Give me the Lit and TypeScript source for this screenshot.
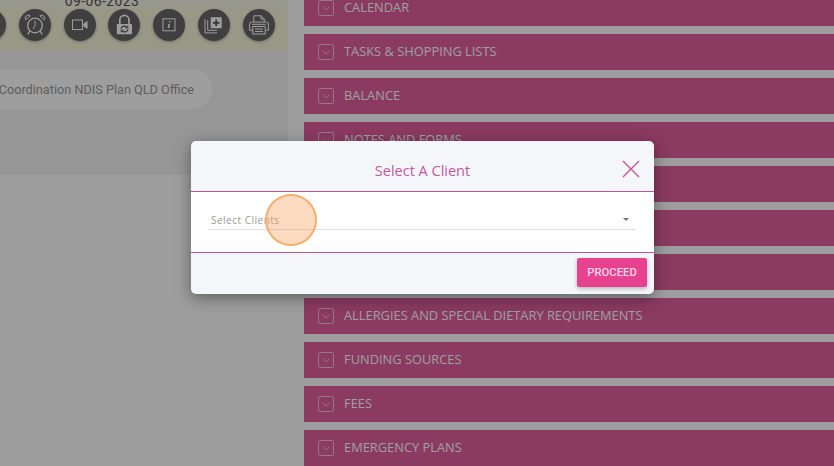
import {LitElement, html, css, svg} from 'lit';
import {customElement} from 'lit/decorators.js';

const ROWS = [
    'CALENDAR',
    'TASKS & SHOPPING LISTS',
    'BALANCE',
    'NOTES AND FORMS',
    '',
    '',
    '',
    'ALLERGIES AND SPECIAL DIETARY REQUIREMENTS',
    'FUNDING SOURCES',
    'FEES',
    'EMERGENCY PLANS',
];

const ICONS = [
    svg``,
    // alarm clock
    svg`<circle cx="12" cy="12.500" r="7.300" stroke-width="1.300" />
        <path d="M12 7.500v5.500l-2.200 3" />
        <path d="M2.800 6.800a3 3 0 0 1 4.400-4zM21.200 6.800a3 3 0 0 0-4.400-4z" />
        <path d="M6.800 18 4.800 21.500M17.200 18l2 3.500" stroke-width="1.300" />`,
    // video camera
    svg`<rect x="4.500" y="7" width="10" height="9.500" />
        <path d="M15.200 11 19.500 7.800v8.200L15.200 13z" fill="currentColor" stroke="none" />`,
    // padlock with sync arrows
    svg`<path d="M7.800 11V7a4.600 4.600 0 0 1 9.200 0v4" stroke-width="1.700" />
        <rect x="4.800" y="11" width="15.200" height="10.200" rx="1" fill="currentColor" stroke="none" />
        <path d="M9 16a3.400 3.400 0 0 1 6-1.700M16 16a3.400 3.400 0 0 1-6 1.700" stroke="#555" stroke-width="1.200" />
        <path d="M15.800 12.600v2.200h-2.200M9.200 19.400v-2.200h2.200" stroke="#555" stroke-width="1" />`,
    // info box
    svg`<rect x="6" y="5.800" width="12" height="12" />
        <path d="M12.800 8.300v1.300M12.200 11l-.8 4.200" stroke-width="1.700" />`,
    // add to collection
    svg`<rect x="8.700" y="4.300" width="11" height="11" rx="0.500" fill="currentColor" stroke="none" />
        <path d="M14.200 6.500v6.600M10.900 9.800h6.600" stroke="#555" stroke-width="1.800" />
        <path d="M5.700 7v10.300h9.300" />
        <path d="M3 6.300v13.600h12" />`,
    // printer
    svg`<path d="M6.800 9V2.800h7.400l3 3V9" />
        <path d="M14 2.800v3.200h3.200" />
        <path d="M2.600 17.200V11a2 2 0 0 1 2-2h14.800a2 2 0 0 1 2 2v6.200h-3" />
        <path d="M5.800 17.200h-3.200" />
        <rect x="5.800" y="13.500" width="12.400" height="7.500" />
        <path d="M5 11.300h14M8 16h8M8 18.500h8" />`,
];

@customElement('app-root')
export class AppRoot extends LitElement {
    static styles = css`
        :host {
            display: block;
            position: relative;
            width: 834px;
            height: 466px;
            overflow: hidden;
            background: #fff;
            font-family: "Open Sans", sans-serif;
        }
        .page {
            display: grid;
            grid-template-columns: 288px 530px;
            column-gap: 16px;
            height: 466px;
            overflow: hidden;
        }
        .left {
            height: 175px;
            background: #f3f3f3;
        }
        .date {
            height: 8px;
            overflow: hidden;
            display: flex;
            align-items: flex-end;
            justify-content: center;
            padding-right: 84px;
            background: #f6f5e6;
            font-family: Roboto, sans-serif;
            font-size: 14px;
            line-height: 14px;
            letter-spacing: 0.4px;
            color: #555;
        }
        .toolbar {
            height: 42px;
            background: #f7f5da;
            display: flex;
            gap: 12.8px;
            margin-bottom: 19px;
            padding-top: 1px;
            box-sizing: border-box;
            overflow: hidden;
        }
        .tool {
            flex: none;
            width: 32px;
            height: 32px;
            border-radius: 50%;
            background: #666;
            color: #fff;
            display: flex;
            align-items: center;
            justify-content: center;
            box-shadow: 0 1px 3px rgba(0, 0, 0, 0.3);
        }
        .tool:first-child {
            margin-left: -26px;
        }
        .tool svg {
            width: 24px;
            height: 24px;
            fill: none;
            stroke: currentColor;
            stroke-width: 1;
        }
        .pill {
            width: 212px;
            height: 40px;
            border-radius: 0 20px 20px 0;
            background: #ffffff;
            display: flex;
            align-items: center;
            justify-content: flex-end;
            padding-right: 18px;
            box-sizing: border-box;
            overflow: hidden;
            white-space: nowrap;
            font-family: Roboto, sans-serif;
            font-size: 12.700px;
            color: #999;
        }
        .rows {
            margin-top: -10px;
            display: flex;
            flex-direction: column;
            gap: 8px;
        }
        .row {
            flex: none;
            height: 36px;
            background: #e05e9f;
            display: flex;
            align-items: center;
            gap: 10px;
            padding-left: 14px;
            color: #fff;
            font-size: 12.850px;
        }
        .label {
            padding-bottom: 2px;
        }
        .check {
            width: 16px;
            height: 16px;
            box-sizing: border-box;
            border: 1px solid rgba(255, 255, 255, 0.6);
            border-radius: 2px;
            display: flex;
            align-items: center;
            justify-content: center;
        }
        .check svg {
            width: 10px;
            height: 10px;
            fill: none;
            stroke: rgba(255, 255, 255, 0.55);
            stroke-width: 1;
        }
        .scrim {
            position: absolute;
            inset: 0;
            background: rgba(0, 0, 0, 0.38);
        }
        .modal {
            position: absolute;
            left: 191px;
            top: 141px;
            width: 463px;
            height: 153px;
            background: #f5f6fa;
            border-radius: 5px;
            box-shadow: 0 4px 16px rgba(0, 0, 0, 0.4);
            display: flex;
            flex-direction: column;
            overflow: hidden;
        }
        .modal-head {
            height: 51px;
            flex: none;
            box-sizing: border-box;
            padding-top: 8px;
            border-bottom: 1px solid #b9559a;
            display: flex;
            align-items: center;
            justify-content: center;
            color: #c4589c;
            font-size: 14.500px;
            position: relative;
        }
        .close {
            position: absolute;
            right: 14px;
            top: 19px;
            width: 18px;
            height: 18px;
            fill: none;
            stroke: #c8578f;
            stroke-width: 1.400;
        }
        .modal-body {
            height: 61px;
            flex: none;
            box-sizing: border-box;
            background: #fff;
            border-bottom: 1px solid #b9559a;
            padding: 18px 18px 0;
        }
        .select {
            height: 19px;
            border-bottom: 1px solid #ddd;
            display: flex;
            align-items: center;
            justify-content: space-between;
            padding: 0 7px 0 2px;
            font-size: 10px;
            letter-spacing: 0.5px;
            color: #999;
        }
        .caret {
            width: 0;
            height: 0;
            border-left: 3.500px solid transparent;
            border-right: 3.500px solid transparent;
            border-top: 3.500px solid #777;
        }
        .modal-foot {
            flex: 1;
            display: flex;
            justify-content: flex-end;
            padding: 5px 7px 0 0;
        }
        .proceed {
            width: 70px;
            height: 29px;
            padding: 0;
            border: 0;
            border-radius: 2px;
            background: #e6428f;
            color: #fbd6e8;
            font-family: Roboto, sans-serif;
            font-size: 11.300px;
            font-weight: 500;
            box-shadow: 0 2px 4px rgba(0, 0, 0, 0.25);
        }
        .cursor {
            position: absolute;
            left: 265px;
            top: 194px;
            width: 52px;
            height: 52px;
            box-sizing: border-box;
            border: 2px solid rgba(243, 167, 100, 0.9);
            border-radius: 50%;
            background: rgba(250, 160, 90, 0.38);
        }
    `;

    render() {
        return html`
            <div class="page">
                <div class="left">
                    <div class="date">09-06-2023</div>
                    <div class="toolbar">
                        ${ICONS.map(
                            (icon) => html`<span class="tool"><svg viewBox="0 0 24 24">${icon}</svg></span>`
                        )}
                    </div>
                    <div class="pill">Support Coordination NDIS Plan QLD Office</div>
                </div>
                <div class="rows">
                    ${ROWS.map(
                        (row) => html`
                            <div class="row">
                                <span class="check">
                                    <svg viewBox="0 0 10 10"><path d="M1.500 3.500 5 7l3.500-3.500" /></svg>
                                </span>
                                <span class="label">${row}</span>
                            </div>
                        `
                    )}
                </div>
            </div>
            <div class="scrim"></div>
            <div class="modal">
                <div class="modal-head">
                    Select A Client
                    <svg class="close" viewBox="0 0 18 18"><path d="M1 1l16 16M17 1 1 17" /></svg>
                </div>
                <div class="modal-body">
                    <div class="select">
                        <span>Select Clients</span>
                        <span class="caret"></span>
                    </div>
                </div>
                <div class="modal-foot">
                    <button class="proceed">PROCEED</button>
                </div>
            </div>
            <div class="cursor"></div>
        `;
    }
}
